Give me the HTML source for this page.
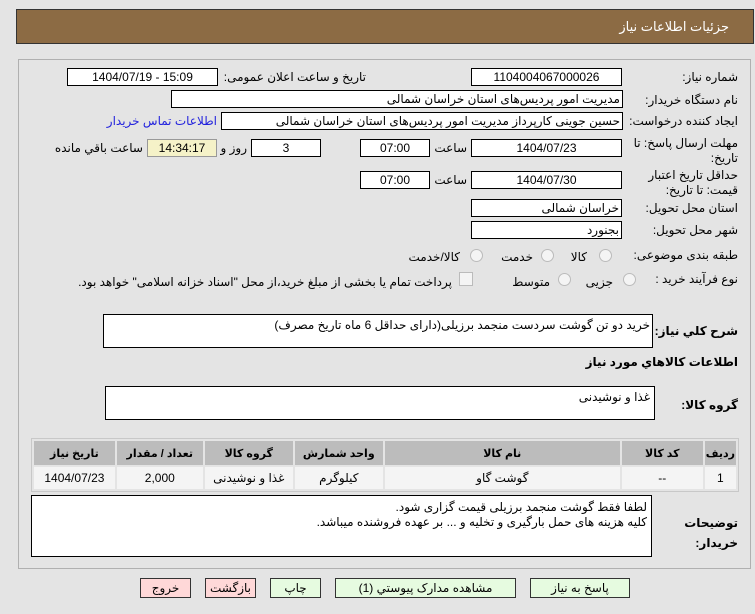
<!DOCTYPE html>
<html><head><meta charset="utf-8"><style>
body{margin:0;width:755px;height:614px;background:#e4e4e4;font-family:"Liberation Sans","DejaVu Sans",sans-serif;font-size:12px;color:#000;position:relative;overflow:hidden}
.a{position:absolute}
.hdr{left:16px;top:9px;width:736px;height:33px;background:#8c6b44;border:1px solid #333}
.hdr span{position:absolute;right:24px;top:9px;color:#fff;font-size:13px}
.panel{left:18px;top:59px;width:731px;height:508px;border:1px solid #b0b0b0}
.f{position:absolute;background:#fff;border:1px solid #000;height:16px;line-height:16px;text-align:center;font-size:12px;box-sizing:content-box}
.fr{text-align:right;padding-right:2px;direction:rtl}
.l{position:absolute;direction:rtl;text-align:right;white-space:nowrap;font-size:12px}
.b{font-weight:bold}
.r{position:absolute;width:11px;height:11px;border-radius:50%;border:1px solid #bbb;background:#f4f4f4}
table{position:absolute;left:31px;top:438px;width:708px;border-collapse:separate;border-spacing:2px;border:1px solid #c8c8c8;background:#e4e4e4;direction:rtl}
th{background:#bcbcbc;height:22px;font-size:11px;font-weight:bold}
td{background:#f4f4f4;height:20px;text-align:center;font-size:12px}
.btn{position:absolute;top:578px;height:18px;line-height:18px;border:1px solid #333;text-align:center;font-size:12px}
.g{background:#e6fbe0}.p{background:#ffd8d8}
</style></head><body>
<div class="a hdr"><span>جزئیات اطلاعات نیاز</span></div>
<div class="a panel"></div>

<div class="l" style="right:17px;top:70px">شماره نیاز:</div>
<div class="f" style="left:471px;top:68px;width:149px">1104004067000026</div>
<div class="l" style="right:389px;top:70px">تاریخ و ساعت اعلان عمومی:</div>
<div class="f" style="left:67px;top:68px;width:149px">1404/07/19 - 15:09</div>

<div class="l" style="right:17px;top:93px">نام دستگاه خریدار:</div>
<div class="f fr" style="left:171px;top:90px;width:448px">مدیریت امور پردیس‌های استان خراسان شمالی</div>

<div class="l" style="right:17px;top:114px">ایجاد کننده درخواست:</div>
<div class="f fr" style="left:221px;top:112px;width:398px">حسین جوینی کارپرداز مدیریت امور پردیس‌های استان خراسان شمالی</div>
<div class="l" style="right:538px;top:114px;color:#2222dd">اطلاعات تماس خریدار</div>

<div class="l" style="right:17px;top:136px;line-height:15px">مهلت ارسال پاسخ: تا<br>تاریخ:</div>
<div class="f" style="left:471px;top:139px;width:149px">1404/07/23</div>
<div class="l" style="right:288px;top:141px">ساعت</div>
<div class="f" style="left:360px;top:139px;width:68px">07:00</div>
<div class="f" style="left:251px;top:139px;width:68px">3</div>
<div class="l" style="right:508px;top:141px">روز و</div>
<div class="f" style="left:147px;top:139px;width:68px;background:#f5f2c8;border-color:#999">14:34:17</div>
<div class="l" style="right:612px;top:141px">ساعت باقي مانده</div>

<div class="l" style="right:17px;top:168px;line-height:15px">حداقل تاریخ اعتبار<br>قیمت: تا تاریخ:</div>
<div class="f" style="left:471px;top:171px;width:149px">1404/07/30</div>
<div class="l" style="right:288px;top:173px">ساعت</div>
<div class="f" style="left:360px;top:171px;width:68px">07:00</div>

<div class="l" style="right:17px;top:201px">استان محل تحویل:</div>
<div class="f fr" style="left:471px;top:199px;width:147px">خراسان شمالی</div>
<div class="l" style="right:17px;top:223px">شهر محل تحویل:</div>
<div class="f fr" style="left:471px;top:221px;width:147px">بجنورد</div>

<div class="l" style="right:17px;top:248px">طبقه بندی موضوعی:</div>
<div class="r" style="left:599px;top:249px"></div><div class="l" style="right:168px;top:250px">کالا</div>
<div class="r" style="left:541px;top:249px"></div><div class="l" style="right:222px;top:250px">خدمت</div>
<div class="r" style="left:470px;top:249px"></div><div class="l" style="right:295px;top:250px">کالا/خدمت</div>

<div class="l" style="right:17px;top:272px">نوع فرآیند خرید :</div>
<div class="r" style="left:623px;top:273px"></div><div class="l" style="right:142px;top:275px">جزیی</div>
<div class="r" style="left:558px;top:273px"></div><div class="l" style="right:205px;top:275px">متوسط</div>
<div class="a" style="left:459px;top:272px;width:12px;height:12px;border:1px solid #bbb;background:#f4f4f4"></div>
<div class="l" style="right:303px;top:275px">پرداخت تمام یا بخشی از مبلغ خرید،از محل "اسناد خزانه اسلامی" خواهد بود.</div>

<div class="l b" style="right:17px;top:324px">شرح کلي نیاز:</div>
<div class="f fr" style="left:103px;top:314px;width:546px;height:32px;line-height:20px">خرید دو تن گوشت سردست منجمد برزیلی(دارای حداقل 6 ماه تاریخ مصرف)</div>
<div class="l b" style="right:17px;top:355px">اطلاعات کالاهاي مورد نیاز</div>
<div class="l b" style="right:17px;top:398px">گروه کالا:</div>
<div class="f fr" style="left:105px;top:386px;width:544px;height:32px;line-height:20px;padding-right:4px">غذا و نوشیدنی</div>

<table>
<tr><th style="width:26px">رديف</th><th style="width:79px">کد کالا</th><th style="width:233px">نام کالا</th><th style="width:86px">واحد شمارش</th><th style="width:86px">گروه کالا</th><th style="width:84px">تعداد / مقدار</th><th>تاریخ نیاز</th></tr>
<tr><td>1</td><td>--</td><td>گوشت گاو</td><td>کیلوگرم</td><td>غذا و نوشیدنی</td><td>2,000</td><td>1404/07/23</td></tr>
</table>

<div class="l b" style="right:17px;top:513px;line-height:20px">توضیحات<br>خریدار:</div>
<div class="f fr" style="left:31px;top:495px;line-height:15px;padding-right:4px;padding-top:4px;box-sizing:border-box;width:621px;height:62px">لطفا فقط گوشت منجمد برزیلی قیمت گزاری شود.<br>کلیه هزینه های حمل بارگیری و تخلیه و ... بر عهده فروشنده میباشد.</div>

<div class="btn p" style="left:140px;width:49px">خروج</div>
<div class="btn p" style="left:205px;width:49px">بازگشت</div>
<div class="btn g" style="left:270px;width:49px">چاپ</div>
<div class="btn g" style="left:335px;width:179px">مشاهده مدارک پیوستي (1)</div>
<div class="btn g" style="left:530px;width:98px">پاسخ به نیاز</div>
</body></html>
